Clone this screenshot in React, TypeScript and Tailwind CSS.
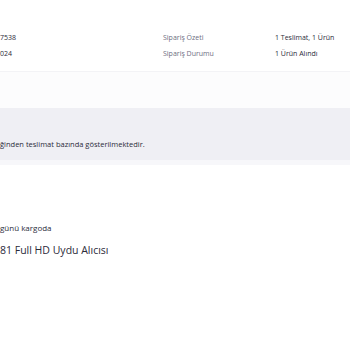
import React from "react";

export default function App() {
  const font = { fontFamily: '"Open Sans", "Liberation Sans", sans-serif' };
  return (
    <div className="w-[350px] h-[350px] overflow-hidden bg-white text-[#2b2b3a]" style={font}>
      <div className="h-[71px] bg-white pt-[30px]">
        <div className="flex h-[16px] items-center text-[7px]">
          <div className="w-[163px] whitespace-nowrap">7538</div>
          <div className="w-[112px] text-[#6e6e82]">Sipariş Özeti</div>
          <div>1 Teslimat, 1 Ürün</div>
        </div>
        <div className="flex h-[16px] items-center text-[7px]">
          <div className="w-[163px] whitespace-nowrap">024</div>
          <div className="w-[112px] text-[#6e6e82]">Sipariş Durumu</div>
          <div>1 Ürün Alındı</div>
        </div>
      </div>
      <div className="h-[1px] bg-[#f3f3f6]" />
      <div className="h-[36px] bg-[#fcfcfd]" />
      <div className="h-[52px] bg-[#efeff4] flex items-end pb-[10px]">
        <div className="text-[7.5px] whitespace-nowrap">ğinden teslimat bazında gösterilmektedir.</div>
      </div>
      <div className="h-[5px] bg-[#f7f7fa]" />
      <div className="pt-[57px]">
        <div className="text-[8px] h-[12px] flex items-center whitespace-nowrap">günü kargoda</div>
        <div className="mt-[10px] text-[10.5px] h-[14px] flex items-center whitespace-nowrap">81 Full HD Uydu Alıcısı</div>
      </div>
    </div>
  );
}
